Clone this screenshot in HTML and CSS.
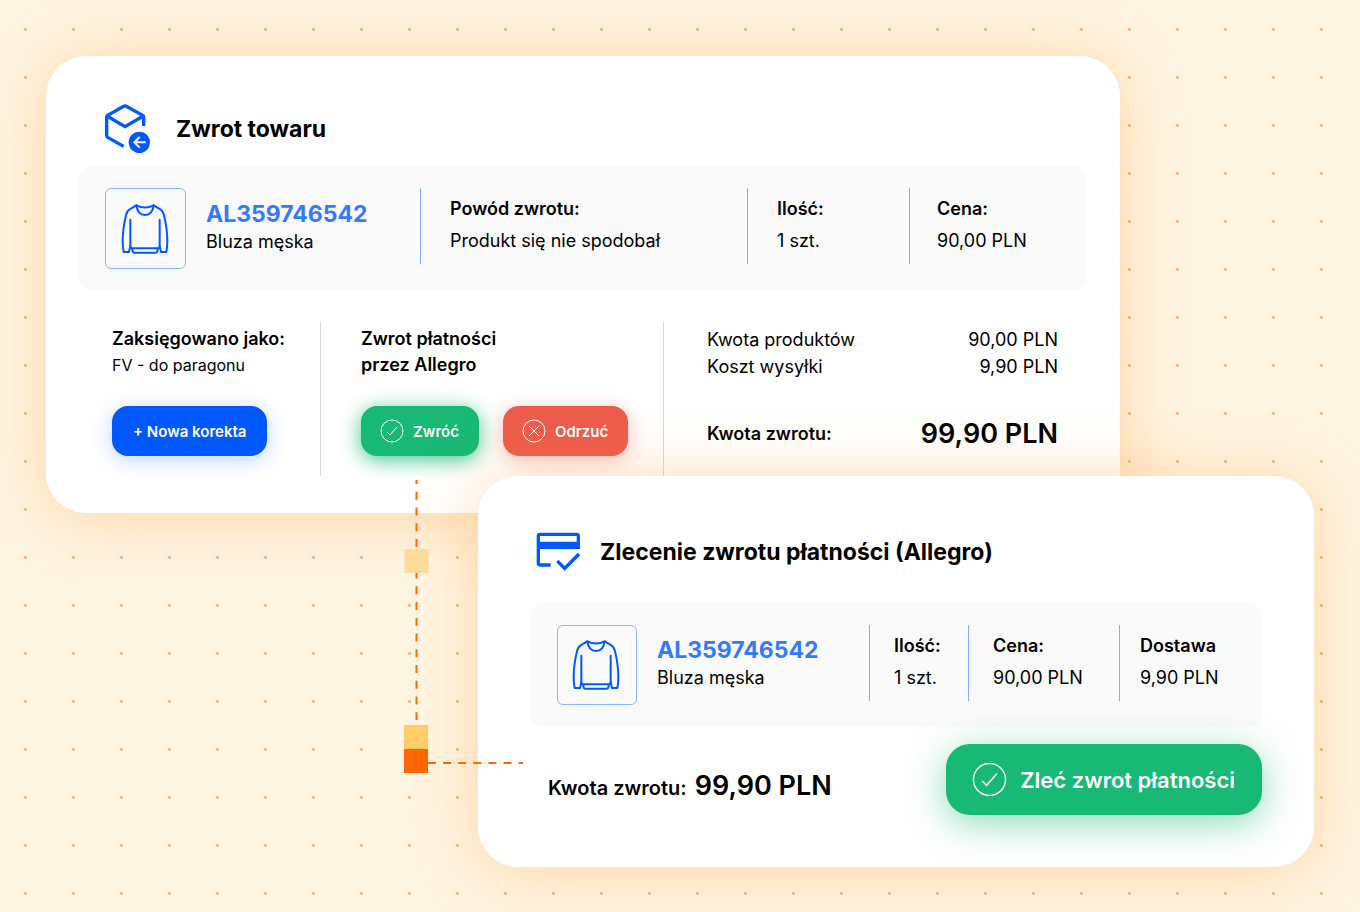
FILE: index.html
```html
<!DOCTYPE html>
<html lang="pl">
<head>
    <meta charset="UTF-8">
    <meta name="viewport" content="width=device-width, initial-scale=1.0">
    <title>Zwrot towaru</title>
    <link rel="stylesheet" href="styles.css">
</head>
<body>

    <!-- shared icons -->
    <svg class="sprite" aria-hidden="true">
        <symbol id="sweater" viewBox="0 0 150 150">
            <path d="M46 4 L26 16 Q17 21 15 34 Q5 75 5 112 Q5 130 8 144 H24 L28 127 V47"/>
            <path d="M98 4 L118 16 Q127 21 129 34 Q139 75 139 112 Q139 130 136 144 H120 L116 127 V47"/>
            <path d="M46 4 Q72 17 98 4 Q94 33 72 33 Q50 33 46 4 Z"/>
            <path d="M28 127 Q29 133 34 133 H110 Q115 133 116 127 M34 133 Q34 146 39 146 H105 Q110 146 110 133"/>
        </symbol>
        <symbol id="check" viewBox="0 0 24 24">
            <circle cx="12" cy="12" r="11"/>
            <path d="M7 13 L10 16 L17 8"/>
        </symbol>
        <symbol id="cross" viewBox="0 0 24 24">
            <circle cx="12" cy="12" r="11"/>
            <path d="M7 7 L17 17 M17 7 L7 17"/>
        </symbol>
    </svg>

    <main class="stage">
        <section class="card card-return">
            <header class="card-header">
                <svg class="icon-box" viewBox="45 40 138 150" aria-hidden="true">
                    <path d="M161 106 V79 Q161 76 158 74 L109 47 Q105 45 101 47 L53 74 Q50 76 50 79 V134 Q50 138 53 140 L101 167 M51 76 L105 108 L160 76"/>
                    <circle cx="148" cy="155" r="32"/>
                    <path class="arrow" d="M167 155 H133 M149 139 L133 155 L149 171"/>
                </svg>
                <h1>Zwrot towaru</h1>
            </header>

            <div class="panel panel-return">
                <div class="product">
                    <div class="thumb"><svg><use href="#sweater"/></svg></div>
                    <div class="product-text">
                        <a href="#">AL359746542</a>
                        <span>Bluza męska</span>
                    </div>
                </div>
                <dl class="cell">
                    <dt>Powód zwrotu:</dt>
                    <dd>Produkt się nie spodobał</dd>
                </dl>
                <dl class="cell">
                    <dt>Ilość:</dt>
                    <dd>1 szt.</dd>
                </dl>
                <dl class="cell">
                    <dt>Cena:</dt>
                    <dd>90,00 PLN</dd>
                </dl>
            </div>

            <div class="details">
                <div class="detail">
                    <h2>Zaksięgowano jako:</h2>
                    <p>FV - do paragonu</p>
                    <div class="actions">
                        <button type="button" class="btn btn-blue">+ Nowa korekta</button>
                    </div>
                </div>
                <div class="detail">
                    <h2>Zwrot płatności<br>przez Allegro</h2>
                    <div class="actions">
                        <button type="button" class="btn btn-green"><svg><use href="#check"/></svg>Zwróć</button>
                        <button type="button" class="btn btn-red"><svg><use href="#cross"/></svg>Odrzuć</button>
                    </div>
                </div>
                <dl class="detail sums">
                    <div>
                        <dt>Kwota produktów</dt>
                        <dd>90,00 PLN</dd>
                    </div>
                    <div>
                        <dt>Koszt wysyłki</dt>
                        <dd>9,90 PLN</dd>
                    </div>
                    <div class="sum-total">
                        <dt>Kwota zwrotu:</dt>
                        <dd>99,90 PLN</dd>
                    </div>
                </dl>
            </div>
        </section>

        <section class="card card-order">
            <header class="card-header">
                <svg class="icon-payment" viewBox="48 64 135 120" aria-hidden="true">
                    <path d="M92 163 H60 Q55 163 55 158 V76 Q55 71 60 71 H170 Q175 71 175 76 V104 M112 151 L134 173 L177 130"/>
                    <path class="band" d="M51 93 H180 V115 H51 Z"/>
                </svg>
                <h1>Zlecenie zwrotu płatności (Allegro)</h1>
            </header>

            <div class="panel panel-order">
                <div class="product">
                    <div class="thumb"><svg><use href="#sweater"/></svg></div>
                    <div class="product-text">
                        <a href="#">AL359746542</a>
                        <span>Bluza męska</span>
                    </div>
                </div>
                <dl class="cell">
                    <dt>Ilość:</dt>
                    <dd>1 szt.</dd>
                </dl>
                <dl class="cell">
                    <dt>Cena:</dt>
                    <dd>90,00 PLN</dd>
                </dl>
                <dl class="cell cell-narrow">
                    <dt>Dostawa</dt>
                    <dd>9,90 PLN</dd>
                </dl>
            </div>

            <footer class="card-footer">
                <p class="total">Kwota zwrotu: <strong>99,90 PLN</strong></p>
                <button type="button" class="btn btn-green btn-big"><svg><use href="#check"/></svg>Zleć zwrot płatności</button>
            </footer>
        </section>

        <!-- line from "Zwróć" to the payment order -->
        <svg class="connector" viewBox="0 0 120 294" aria-hidden="true">
            <path d="M12.5 0 V240" stroke-dasharray="8 7.75" stroke-dashoffset="4"/>
            <path d="M24 283 H119" stroke-dasharray="8 7.1"/>
            <rect x="0.5" y="69" width="24" height="24" fill="#ffdb99"/>
            <rect x="0" y="245" width="24" height="24" fill="#ffcc66"/>
            <rect x="0" y="269" width="24" height="24" fill="#ff6600"/>
        </svg>
    </main>

</body>
</html>
```
FILE: styles.css
```css
* {
    box-sizing: border-box;
}
body {
    margin: 0;
    min-height: 100vh;
    font-family: Inter, sans-serif;
    font-size: 18px;
    color: #000;
    background-color: #fff5e3;
    background-image: radial-gradient(circle at 25.5px 29.5px, #ffb078 1px, transparent 2px);
    background-size: 48px 48px;
}
h1, h2, p, dl, dd {
    margin: 0;
}
.sprite {
    position: absolute;
    width: 0;
    height: 0;
}
.stage {
    position: relative;
    padding: 56px 46px 45px;
    overflow: hidden;
}

/* cards */
.card {
    background-color: #fff;
    border-radius: 40px;
    box-shadow: 0 4px 64px rgba(255, 153, 51, 0.36);
}
.card-return {
    margin-right: 194px;
    padding: 48px 34px 37px 33px;
}
.card-order {
    position: relative;
    margin-top: -37px;
    margin-left: 432px;
    padding: 56px 52px 52px;
}
.card-header {
    display: flex;
    align-items: center;
}
.card-header h1 {
    font-size: 23px;
    font-weight: 700;
    line-height: 28px;
}
.card-return .card-header {
    gap: 25px;
    padding-left: 26px;
}
.card-order .card-header {
    gap: 19px;
    padding-left: 6px;
}
.icon-box {
    width: 46px;
    height: 50px;
}
.icon-payment {
    width: 45px;
    height: 40px;
}
.icon-box path,
.icon-payment path {
    fill: none;
    stroke: #0059ff;
    stroke-width: 10px;
}
.icon-box circle,
.icon-payment .band {
    fill: #0059ff;
    stroke: none;
}
.icon-box .arrow {
    stroke: #fff;
    stroke-width: 6px;
}

/* product panel */
.panel {
    display: grid;
    padding: 22px 0 22px 26px;
    background-color: #fafafa;
    border-radius: 14px;
}
.panel-return {
    grid-template-columns: 315fr 327fr 162fr 177fr;
    margin-top: 12px;
}
.panel-order {
    grid-template-columns: 312fr 99fr 151fr 143fr;
    margin-top: 31px;
    padding-left: 27px;
}
.product {
    display: flex;
    align-items: center;
    gap: 20px;
}
.thumb {
    display: flex;
    align-items: center;
    justify-content: center;
    width: 81px;
    height: 81px;
    border: 1px solid #8ab4ff;
    border-radius: 6px;
}
.panel-order .thumb {
    width: 80px;
    height: 80px;
}
.thumb svg {
    width: 50px;
    height: 50px;
    fill: none;
    stroke: #0059ff;
    stroke-width: 6px;
    stroke-linejoin: round;
    stroke-linecap: round;
}
.product-text {
    display: flex;
    flex-direction: column;
    padding-bottom: 2px;
    line-height: 27px;
}
.product-text a {
    font-size: 23px;
    font-weight: 700;
    color: #337aff;
    text-decoration: none;
}
.cell {
    height: 76px;
    padding: 5px 0 0 29px;
    border-left: 1px solid #80acff;
    line-height: 32px;
    white-space: nowrap;
}
.cell:last-child {
    padding-left: 27px;
}
.panel-order .cell {
    padding-left: 24px;
}
.panel-order .cell-narrow {
    padding-left: 20px;
}
.cell dt {
    font-weight: 600;
}

/* booking, refund and sums */
.details {
    display: grid;
    grid-template-columns: 208fr 343fr 395fr;
    margin: 31px 28px 0 33px;
}
.detail {
    min-height: 154px;
    padding-top: 4px;
    line-height: 26px;
}
.detail + .detail {
    padding-left: 40px;
    border-left: 1px solid #d9d9d9;
}
.detail h2 {
    font-size: 18px;
    font-weight: 600;
}
.detail p {
    font-size: 16px;
}
.actions {
    display: flex;
    gap: 24px;
    margin-top: 28px;
}
.detail + .sums {
    padding-left: 43px;
    line-height: 27px;
}
.sums div {
    display: flex;
    align-items: center;
    justify-content: space-between;
}
.sums .sum-total {
    margin-top: 37px;
    font-weight: 600;
    line-height: 34px;
}
.sum-total dd,
.total strong {
    font-size: 27px;
    font-weight: 600;
}

/* buttons */
.btn {
    display: flex;
    align-items: center;
    gap: 9px;
    height: 50px;
    padding: 0 20px 0 19px;
    border: 0;
    border-radius: 16px;
    font-family: inherit;
    font-size: 15px;
    font-weight: 600;
    color: #fff;
    white-space: nowrap;
    cursor: pointer;
}
.btn svg {
    width: 24px;
    height: 24px;
    fill: none;
    stroke: #fff;
    stroke-width: 1px;
}
.btn-blue {
    padding: 0 21px;
    background-color: #0059ff;
    box-shadow: 0 4px 20px rgba(0, 89, 255, 0.25);
}
.btn-green {
    background-color: #17b974;
    box-shadow: 0 4px 20px rgba(23, 185, 116, 0.8);
}
.btn-red {
    background-color: #ed5c4b;
    box-shadow: 0 4px 20px rgba(237, 92, 75, 0.4);
}
.btn-big {
    gap: 13px;
    height: 71px;
    padding: 0 27px 0 26px;
    border-radius: 24px;
    font-size: 22px;
    box-shadow: 0 8px 36px rgba(23, 185, 116, 0.5);
}
.btn-big svg {
    width: 35px;
    height: 35px;
}
.card-footer {
    display: flex;
    align-items: center;
    justify-content: space-between;
    margin-top: 17px;
    padding-left: 18px;
}
.total {
    display: flex;
    align-items: baseline;
    gap: 8px;
    padding-top: 14px;
    font-size: 20px;
    font-weight: 600;
    line-height: 34px;
}

/* dashed connector */
.connector {
    position: absolute;
    top: 480px;
    left: 404px;
    width: 120px;
    height: 294px;
}
.connector path {
    fill: none;
    stroke: #ff6600;
    stroke-width: 2px;
}
```
